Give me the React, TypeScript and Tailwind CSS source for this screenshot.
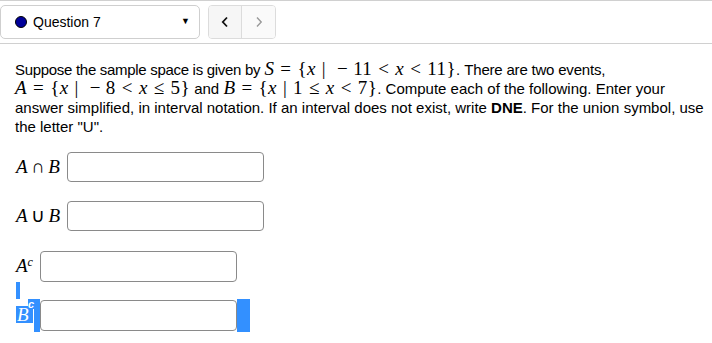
import React from "react";

const serif = { fontFamily: '"Liberation Serif", serif' };

const M = ({ children }: { children: React.ReactNode }) => (
  <span className="text-[19px] leading-[16px] tracking-[0.4px]" style={serif}>{children}</span>
);
const I = ({ children }: { children: React.ReactNode }) => <i>{children}</i>;
const R = ({ children }: { children: React.ReactNode }) => <span className="mx-[6px]">{children}</span>;
const Bn = ({ children }: { children: React.ReactNode }) => <span className="mx-[5px]">{children}</span>;

export default function App() {
  return (
    <div className="w-[712px] h-[343px] bg-white overflow-hidden text-black" style={{ fontFamily: '"Liberation Sans", sans-serif' }}>
      <div className="border-t border-b border-[#d0d0d0] pt-[4px] pb-[4px] flex items-center">
        <div className="w-[200px] h-[34px] border border-[#cfcfcf] rounded-[5px] flex items-center pl-[14px] pr-[9px]">
          <span className="w-[12px] h-[12px] rounded-full bg-[#00009a] border border-black" />
          <span className="ml-[6px] text-[14px]">Question 7</span>
          <span className="ml-auto text-[9px]">▼</span>
        </div>
        <div className="ml-[8px] flex h-[34px] border border-[#dcdcdc] rounded-[4px] overflow-hidden">
          <div className="w-[33px] bg-[#f6f6f6] border-r border-[#dcdcdc] flex items-center justify-center">
            <svg width="8" height="12" viewBox="0 0 8 12"><path d="M6 1.5 L1.8 6 L6 10.5" stroke="#111" strokeWidth="1.8" fill="none" /></svg>
          </div>
          <div className="w-[33px] bg-[#fafafa] flex items-center justify-center">
            <svg width="8" height="12" viewBox="0 0 8 12"><path d="M2 1.5 L6.2 6 L2 10.5" stroke="#999" strokeWidth="1.4" fill="none" /></svg>
          </div>
        </div>
      </div>

      <div className="px-[15px] pt-[16px] text-[15px] leading-[19px] whitespace-nowrap">
        <p>
          <span className="tracking-[-0.3px]">Suppose the sample space is given by</span>{" "}
          <M><I>S</I><R>=</R>{"{"}<I>x</I><R>|</R><Bn>−</Bn>11<R>&lt;</R><I>x</I><R>&lt;</R>11{"}"}</M>. <span className="tracking-[-0.2px]">There are two events,</span>
          <br />
          <M><I>A</I><R>=</R>{"{"}<I>x</I><R>|</R><Bn>−</Bn>8<R>&lt;</R><I>x</I><R>≤</R>5{"}"}</M> and{" "}
          <M><I>B</I><R>=</R>{"{"}<I>x</I><R>|</R>1<R>≤</R><I>x</I><R>&lt;</R>7{"}"}</M>. Compute each of the following. Enter your
          <br />
          answer simplified, in interval notation. If an interval does not exist, write <b>DNE</b>. For the union symbol, use
          <br />
          the letter "U".
        </p>
      </div>

      <div className="pl-[16px] pt-[16px] flex flex-col" style={serif}>
        <div className="flex items-center h-[30px]">
          <span className="text-[19px] w-[47px] whitespace-nowrap"><i>A</i><span className="mx-[3.5px]">∩</span><i>B</i></span>
          <div className="ml-[4px] w-[197px] h-[30px] border border-[#8a8a8a] rounded-[4px]" />
        </div>
        <div className="flex items-center h-[30px] mt-[19px]">
          <span className="text-[19px] w-[47px] whitespace-nowrap"><i>A</i><span className="mx-[3.5px]">∪</span><i>B</i></span>
          <div className="ml-[4px] w-[197px] h-[30px] border border-[#8a8a8a] rounded-[4px]" />
        </div>
        <div className="flex items-center h-[31px] mt-[20px]">
          <span className="text-[19px] w-[20px] whitespace-nowrap"><i>A</i><sup className="text-[12px] italic">c</sup></span>
          <div className="ml-[4px] w-[197px] h-[31px] border border-[#8a8a8a] rounded-[4px]" />
        </div>
        <div className="w-[4px] h-[17px] bg-[#3390ff]" />
        <div className="flex items-start h-[33px]">
          <div className="relative w-[18px] h-[33px]">
            <span className="absolute left-0 top-[7px] h-[17px] w-[17px] bg-[#3390ff] text-white text-[19px] leading-[17px] italic pl-[1px]">B</span>
            <span className="absolute left-[12px] top-[0px] h-[10px] w-[7px] bg-[#3390ff] text-white text-[11px] leading-[10px] italic font-bold" style={{ fontFamily: '"Liberation Sans", sans-serif' }}>c</span>
          </div>
          <div className="w-[6px] h-[33px] bg-[#3390ff]" />
          <div className="w-[197px] h-[31px] mt-[1px] border border-[#8a8a8a] rounded-[4px]" />
          <div className="w-[13px] h-[33px] bg-[#3390ff]" />
        </div>
      </div>
    </div>
  );
}
